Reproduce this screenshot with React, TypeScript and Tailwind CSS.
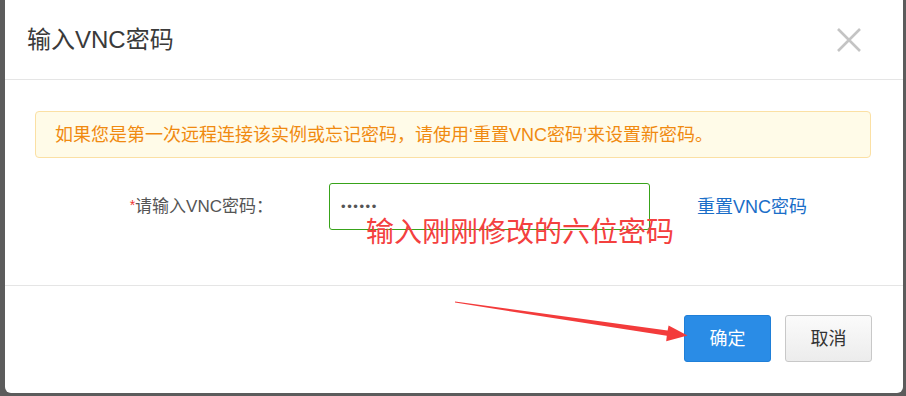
import React from "react";

const font = { fontFamily: '"Liberation Sans", "Noto Sans CJK SC", sans-serif' };

export default function App() {
  return (
    <div
      className="relative w-[906px] h-[396px] bg-[#5c5c5c] overflow-hidden"
      style={font}
    >
      <div className="ml-[5px] w-[898px] h-[393px] bg-white rounded-b-[6px] flex flex-col">
        {/* header */}
        <div className="h-[80px] shrink-0 border-b border-[#e5e5e5] flex items-center justify-between pl-[22px] pr-[41px]">
          <div className="text-[24px] text-[#3a3a3a] leading-none">输入VNC密码</div>
          <svg width="26" height="24" viewBox="0 0 26 24">
            <path d="M2 1 L24 23 M24 1 L2 23" stroke="#c4c4c4" strokeWidth="2.6" fill="none" />
          </svg>
        </div>
        {/* body */}
        <div className="h-[206px] shrink-0 border-b border-[#e5e5e5] pt-[31px]">
          <div className="ml-[30px] w-[836px] h-[47px] rounded-[4px] border border-[#fbe0a4] bg-[#fffbe8] flex items-center pl-[19px] text-[18px] text-[#f08a10] leading-none">
            如果您是第一次远程连接该实例或忘记密码，请使用‘重置VNC密码’来设置新密码。
          </div>
          <div className="mt-[25px] flex items-center">
            <div className="w-[268px] text-right text-[17px] text-[#555] leading-none">
              <span className="text-[#e33] text-[14px] align-top">*</span>请输入VNC密码：
            </div>
            <div className="ml-[56px] w-[321px] h-[47px] rounded-[3px] border border-[#38a31a] flex items-center pl-[11px]">
              <span className="text-[13px] text-[#555] tracking-[1.6px] leading-none">••••••</span>
            </div>
            <div className="ml-[47px] text-[18px] text-[#1a6ec8] leading-none">重置VNC密码</div>
          </div>
        </div>
        {/* footer */}
        <div className="flex justify-end pt-[29px] pr-[31px] gap-[14px]">
          <button className="w-[87px] h-[47px] rounded-[3px] bg-[#2a8ce6] border border-[#1f7fd8] text-white text-[18px] leading-none">
            确定
          </button>
          <button className="w-[87px] h-[47px] rounded-[3px] bg-gradient-to-b from-[#fbfbfb] to-[#ececec] border border-[#c8c8c8] text-[#333] text-[18px] leading-none">
            取消
          </button>
        </div>
      </div>

      {/* annotation text */}
      <div className="absolute left-[366px] top-[219px] text-[28px] text-[#f4403f] leading-none whitespace-nowrap">
        输入刚刚修改的六位密码
      </div>
      {/* annotation arrow */}
      <svg className="absolute left-0 top-0" width="906" height="396" viewBox="0 0 906 396">
        <polygon
          points="455,301.4 667.6,330.4 668.6,325.4 687.5,335.6 666.2,341.2 666.8,335.8 455,302.6"
          fill="#f33b3b"
        />
      </svg>
    </div>
  );
}
